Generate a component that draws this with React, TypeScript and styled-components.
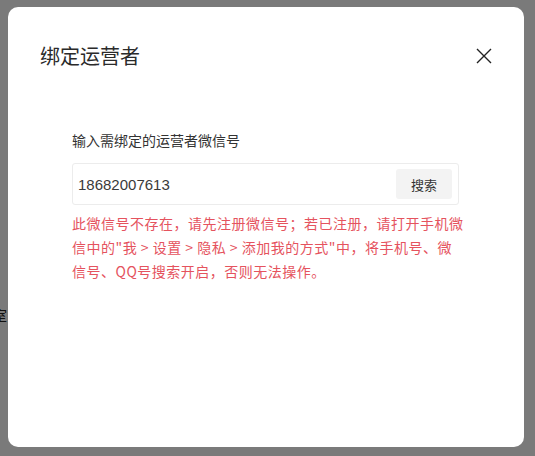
import React from "react";
import styled, { createGlobalStyle } from "styled-components";

const Global = createGlobalStyle`
  html, body { margin: 0; padding: 0; background: #fff; }
  body { font-family: "Microsoft YaHei", "Noto Sans CJK SC", "Liberation Sans", sans-serif; }
`;

const Page = styled.div`
  width: 535px;
  height: 456px;
  overflow: hidden;
  position: relative;
`;

const BgText = styled.div`
  padding-top: 305px;
  margin-left: -7px;
  font-size: 14px;
  color: #222;
`;

const Overlay = styled.div`
  position: absolute;
  inset: 0;
  background: rgba(0, 0, 0, 0.52);
`;

const Dialog = styled.div`
  position: absolute;
  left: 8px;
  top: 7px;
  width: 516px;
  height: 440px;
  background: #fff;
  border-radius: 10px;
  box-sizing: border-box;
  padding: 0 65px 0 64px;
`;

const Header = styled.div`
  display: flex;
  align-items: center;
  justify-content: space-between;
  height: 28px;
  margin: 35px -34px 0 -32px;
`;

const Title = styled.h2`
  margin: 0;
  font-size: 20px;
  font-weight: 400;
  color: #2a2a2a;
  line-height: 28px;
`;

const Close = styled.button`
  border: 0;
  background: none;
  padding: 0;
  width: 18px;
  height: 18px;
  display: flex;
  align-items: center;
  justify-content: center;
  cursor: pointer;
`;

const Label = styled.div`
  margin-top: 60px;
  font-size: 14px;
  line-height: 20px;
  color: #333;
`;

const InputBox = styled.div`
  margin-top: 13px;
  height: 42px;
  box-sizing: border-box;
  border: 1px solid #ececec;
  border-radius: 3px;
  display: flex;
  align-items: center;
  padding: 0 6px 0 5px;
`;

const Input = styled.div`
  flex: 1;
  font-family: "Liberation Sans", "Noto Sans CJK SC", sans-serif;
  font-size: 15px;
  color: #3a3a3a;
`;

const SearchBtn = styled.button`
  width: 56px;
  height: 30px;
  border: 0;
  border-radius: 3px;
  background: #f3f3f3;
  font-family: inherit;
  font-size: 13px;
  color: #333;
`;

const ErrorText = styled.p`
  margin: 6px -14px 0 0;
  font-size: 14px;
  letter-spacing: 0.5px;
  line-height: 24px;
  color: #e5535e;
`;

export default function App() {
  return (
    <Page>
      <Global />
      <BgText>室</BgText>
      <Overlay />
      <Dialog>
        <Header>
          <Title>绑定运营者</Title>
          <Close aria-label="close">
            <svg width="16" height="16" viewBox="0 0 16 16">
              <path d="M1 1L15 15M15 1L1 15" stroke="#222" strokeWidth="1.4" fill="none" />
            </svg>
          </Close>
        </Header>
        <Label>输入需绑定的运营者微信号</Label>
        <InputBox>
          <Input>18682007613</Input>
          <SearchBtn>搜索</SearchBtn>
        </InputBox>
        <ErrorText>
          此微信号不存在，请先注册微信号；若已注册，请打开手机微
          <br />
          信中的"我 &gt; 设置 &gt; 隐私 &gt; 添加我的方式"中，将手机号、微
          <br />
          信号、QQ号搜索开启，否则无法操作。
        </ErrorText>
      </Dialog>
    </Page>
  );
}
